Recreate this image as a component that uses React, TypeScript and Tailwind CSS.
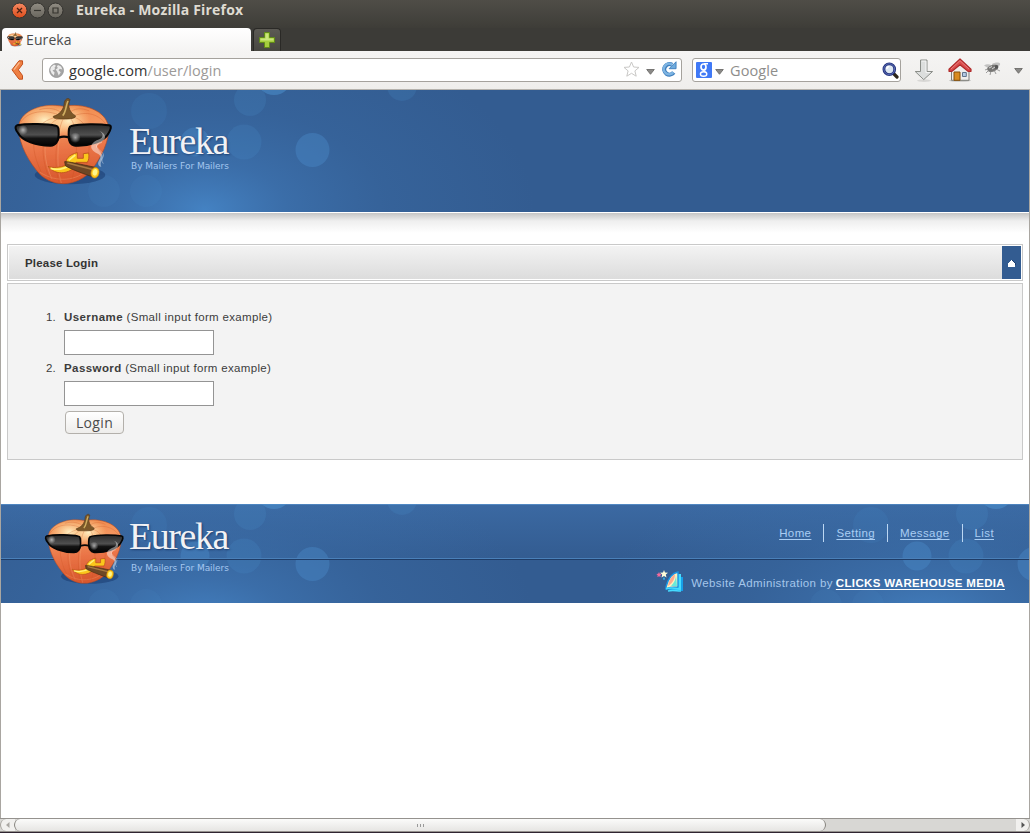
import React from "react";

const UI = "font-['Open_Sans','Noto_Sans',sans-serif]";

function Pumpkin({ id, className }: { id: string; className: string }) {
  const body = `${id}-body`;
  const lens = `${id}-lens`;
  const glow = `${id}-glow`;
  const shine = `${id}-shine`;
  const clip = `${id}-clip`;
  const shape =
    "M190 52C130 40 66 64 57 106C52 150 76 202 108 242C128 270 160 284 190 284C222 284 256 268 276 242C304 204 330 154 325 112C318 66 252 40 190 52Z";
  return (
    <svg viewBox="42 24 297 270" className={className} aria-hidden="true">
      <defs>
        <linearGradient id={body} x1="0" y1="0" x2="0.1" y2="1">
          <stop offset="0" stopColor="#ee8a4c" />
          <stop offset="0.3" stopColor="#f5965f" />
          <stop offset="0.6" stopColor="#ea7548" />
          <stop offset="1" stopColor="#d9592f" />
        </linearGradient>
        <linearGradient id={lens} x1="0" y1="0" x2="0" y2="1">
          <stop offset="0" stopColor="#2a2a2a" />
          <stop offset="0.5" stopColor="#505050" />
          <stop offset="0.66" stopColor="#141414" />
          <stop offset="1" stopColor="#030303" />
        </linearGradient>
        <radialGradient id={glow}>
          <stop offset="0" stopColor="#fff0c4" />
          <stop offset="1" stopColor="#ffd08b" stopOpacity="0" />
        </radialGradient>
        <radialGradient id={shine}>
          <stop offset="0" stopColor="#fff" stopOpacity="0.6" />
          <stop offset="1" stopColor="#fff" stopOpacity="0" />
        </radialGradient>
        <clipPath id={clip}>
          <path d={shape} />
        </clipPath>
      </defs>
      <ellipse cx="210" cy="258" rx="106" ry="28" fill="#15366a" opacity="0.5" />
      <path d={shape} fill={`url(#${body})`} stroke="#b24a24" strokeWidth="2" />
      <g clipPath={`url(#${clip})`}>
        <ellipse cx="134" cy="94" rx="80" ry="54" fill={`url(#${glow})`} />
        <ellipse cx="206" cy="96" rx="66" ry="50" fill={`url(#${glow})`} />
        <g fill="none" stroke="#c9501f" strokeWidth="2" opacity="0.45">
          <path d="M178 78C120 56 78 74 62 100" />
          <path d="M172 84C108 96 76 150 124 250" />
          <path d="M182 86C128 104 112 190 150 272" />
          <path d="M190 88C170 130 158 220 178 282" />
          <path d="M210 86C232 110 238 190 214 280" />
          <path d="M220 84C264 96 284 150 252 258" />
          <path d="M222 80C270 62 306 84 322 112" />
          <path d="M190 76C172 58 144 54 118 62" />
          <path d="M206 74C222 56 246 56 268 66" />
        </g>
        <g fill="none" stroke="#ffcf9b" strokeWidth="3" opacity="0.22">
          <path d="M183 86C135 106 118 190 156 270" />
          <path d="M194 88C176 130 164 220 184 282" />
          <path d="M120 250C170 282 230 276 266 240" />
        </g>
      </g>
      <path d="M160 82C176 78 192 64 193 40C196 28 206 26 210 32C205 44 202 66 226 80C230 88 210 90 192 90C176 90 158 90 160 82Z" fill="#7b5728" stroke="#573614" strokeWidth="2" />
      <path d="M188 80C199 68 197 50 204 36" stroke="#cfae60" strokeWidth="5" fill="none" />
      <path d="M51 109C84 102 144 105 168 110C176 111 176 120 176 138C176 158 166 171 150 170C110 170 66 156 54 132C46 122 44 112 51 109Z" fill={`url(#${lens})`} stroke="#060606" strokeWidth="6" />
      <path d="M214 111C240 104 300 104 328 109C336 111 332 122 326 132C314 158 266 172 226 170C210 168 206 158 206 138C206 122 206 112 214 111Z" fill={`url(#${lens})`} stroke="#060606" strokeWidth="6" />
      <path d="M176 146Q192 140 208 146" stroke="#080808" strokeWidth="7" fill="none" />
      <circle cx="69" cy="123" r="15" fill={`url(#${shine})`} />
      <circle cx="226" cy="146" r="16" fill={`url(#${shine})`} />
      <path d="M144 232C158 238 180 236 200 228C192 212 208 196 232 191L232 208L250 208L250 194L266 192C268 204 266 214 262 220L228 220L222 236C204 254 166 260 144 232Z" fill="#fbc71c" stroke="#b9501a" strokeWidth="2.5" />
      <path d="M152 238C172 244 196 238 212 228M206 214L226 198" stroke="#fff27a" strokeWidth="5" fill="none" />
      <path d="M298 232C286 216 312 208 296 196C266 182 268 166 290 154C310 150 316 134 294 124C324 136 320 152 296 164C280 178 308 188 308 202C308 214 298 220 304 234Z" fill="#fff" opacity="0.45" />
      <path d="M310 224C296 206 322 204 304 188C288 176 282 168 306 160" stroke="#fff" strokeWidth="3" fill="none" opacity="0.35" />
      <path d="M194 218C200 216 266 231 290 236L280 264C254 256 206 238 196 230Z" fill="#6d4725" stroke="#42270f" strokeWidth="2" />
      <path d="M202 222L284 243" stroke="#a87a42" strokeWidth="5" />
      <ellipse cx="285" cy="251" rx="12" ry="16" fill="#ffc91c" stroke="#d08b10" strokeWidth="2" transform="rotate(12 285 251)" />
      <ellipse cx="285" cy="250" rx="7" ry="10" fill="#fff58a" transform="rotate(12 285 250)" />
    </svg>
  );
}

function Bokeh({ id, repeat = false, height }: { id: string; repeat?: boolean; height: number }) {
  const dots: [number, number, number, number][] = [
    [148, 21, 18, 0.12],
    [249, 10, 16, 0.18],
    [273, -13, 18, 0.5],
    [243, 52, 17.5, 0.18],
    [311.5, 60, 17, 0.34],
    [194, 52, 14.5, 0.35],
    [145, 101, 16, 0.1],
    [103, 101, 16, 0.1],
    [401, -4, 15, 0.18],
  ];
  const tile = (dx: number) => (
    <g key={dx} transform={`translate(${dx} 0)`}>
      <ellipse cx="204" cy="120" rx="330" ry="190" fill={`url(#${id})`} />
      {dots.map(([x, y, r, o]) => (
        <circle key={`${x}-${y}`} cx={x} cy={y} r={r} fill="#4e93d2" opacity={o} />
      ))}
    </g>
  );
  return (
    <svg className="absolute inset-0 h-full w-full" viewBox={`0 0 1028 ${height}`} preserveAspectRatio="none" aria-hidden="true">
      <defs>
        <radialGradient id={id}>
          <stop offset="0" stopColor="#4584c5" stopOpacity="0.95" />
          <stop offset="0.25" stopColor="#4079b8" stopOpacity="0.6" />
          <stop offset="0.55" stopColor="#3c71ad" stopOpacity="0.3" />
          <stop offset="1" stopColor="#3b70ab" stopOpacity="0" />
        </radialGradient>
      </defs>
      {tile(0)}
      {repeat && tile(722)}
    </svg>
  );
}

function TitleBar() {
  return (
    <div className="flex h-7 items-start bg-gradient-to-b from-[#4f4d47] to-[#3e3d38] pl-[11px]">
      <svg width="54" height="20" viewBox="0 0 54 20" aria-hidden="true">
        <defs>
          <linearGradient id="closeBtn" x1="0" y1="0" x2="0" y2="1">
            <stop offset="0" stopColor="#f58a63" />
            <stop offset="1" stopColor="#de4c1a" />
          </linearGradient>
          <linearGradient id="greyBtn" x1="0" y1="0" x2="0" y2="1">
            <stop offset="0" stopColor="#918d83" />
            <stop offset="1" stopColor="#68655d" />
          </linearGradient>
        </defs>
        <circle cx="8.5" cy="10.5" r="7.5" fill="url(#closeBtn)" stroke="#33322e" />
        <circle cx="26.5" cy="10.5" r="7.5" fill="url(#greyBtn)" stroke="#33322e" />
        <circle cx="44.5" cy="10.5" r="7.5" fill="url(#greyBtn)" stroke="#33322e" />
        <path d="M6 8l5 5M11 8l-5 5" stroke="#4a2114" strokeWidth="1.3" />
        <path d="M23 10.5h7" stroke="#36352f" strokeWidth="1.2" />
        <path d="M42 8h5v5h-5z" stroke="#36352f" fill="none" strokeWidth="1.2" />
      </svg>
      <span className={`${UI} ml-[11px] whitespace-nowrap text-[14px] font-bold leading-5 tracking-[0.18px] text-[#dfdbd2]`}>
        Eureka - Mozilla Firefox
      </span>
    </div>
  );
}

function TabStrip() {
  return (
    <div className="flex h-[23px] items-end bg-[#3c3b37] pl-[2px]">
      <div className="flex h-[23px] w-[249px] items-center rounded-t-[4px] bg-gradient-to-b from-white to-[#f5f4f3] pl-[5px]">
        <Pumpkin id="fav" className="h-[15px] w-[16px]" />
        <span className={`${UI} ml-[3px] text-[14px] leading-5 tracking-[0.1px] text-[#4c4c4c]`}>Eureka</span>
      </div>
      <div className="ml-[2px] flex h-[23px] w-[28px] items-center justify-center rounded-t-[4px] border border-b-0 border-[#2a2926] bg-gradient-to-b from-[#5c5a54] to-[#474640] pb-[1px]">
        <svg width="16" height="16" viewBox="0 0 16 16" aria-hidden="true">
          <path d="M5.5 .5h5v5h5v5h-5v5h-5v-5h-5v-5h5z" fill="#a5cc3e" stroke="#618a18" />
          <path d="M6.5 1.5h3v5h5v2h-13v-2h5z" fill="#cbe67c" />
        </svg>
      </div>
    </div>
  );
}

function Caret() {
  return (
    <svg width="9" height="6" viewBox="0 0 9 6" className="shrink-0" aria-hidden="true">
      <path d="M.7 .5h7.6L4.5 5.3z" fill="#8a8987" stroke="#636260" strokeWidth=".8" />
    </svg>
  );
}

function Toolbar() {
  return (
    <div className="flex h-[39px] items-center border-b border-[#b5b2ad] bg-gradient-to-b from-[#f5f4f3] to-[#efeeec] pl-[11px]">
      <svg width="14" height="20" viewBox="0 0 14 20" aria-hidden="true">
        <path d="M8 .8L1 9.8L8 19.2L11.5 19.2L11.5 15.5L7.3 9.8L11.6 4.2L11.5 .8z" fill="#ee7f42" stroke="#c4501c" strokeLinejoin="round" />
        <path d="M8.5 2.3L3 9.6" stroke="#fbb98a" strokeWidth="1.4" />
      </svg>
      <div className="ml-[17px] flex h-[24px] w-[640px] items-center rounded-[3px] border border-[#a5a29d] bg-white pl-[6px]">
        <svg width="15" height="15" viewBox="0 0 15 15" aria-hidden="true">
          <circle cx="7.5" cy="7.5" r="6.9" fill="#a6a6a6" stroke="#999" />
          <path d="M2 4L5 1.6L7 2.7L5.6 4.6L6 6.2L3.5 7.5L5.6 9.4L4.8 12.5L2.6 10.2L1.2 7zM9 2l3 1.6 1.4 3-2.6-.8-1.3 1.4 2.2 2-2 3.2-1.4-3.6-1.6-2.2 2.2-1.6-1.1-1.4z" fill="#ececec" />
        </svg>
        <span className={`${UI} ml-[5px] pt-[2px] text-[14.5px] leading-5 tracking-[0.06px] text-[#333]`}>
          google.com<span className="text-[#9c9a98]">/user/login</span>
        </span>
        <div className="ml-auto flex items-center pr-[4px]">
          <svg width="17" height="17" viewBox="0 0 17 17" className="mb-[2px]" aria-hidden="true">
            <path d="M8.5 1l2.1 5 5.4.4-4.1 3.5 1.3 5.3-4.7-2.9-4.7 2.9 1.3-5.3L1 6.4 6.4 6z" fill="#fff" stroke="#c9c8c6" strokeLinejoin="round" />
          </svg>
          <div className="ml-[6px] mt-[3px] flex"><Caret /></div>
          <svg width="16" height="16" viewBox="0 0 17 17" className="mb-[2px] ml-[6px]" aria-hidden="true">
            <path d="M13.5 12.3A5.6 5.6 0 1 1 11.8 4" fill="none" stroke="#3f7fbd" strokeWidth="4.4" />
            <path d="M16 .8v7.4H8.6z" fill="#6facde" stroke="#3f7fbd" strokeLinejoin="round" />
            <path d="M13 12A5.6 5.6 0 1 1 11.8 4" fill="none" stroke="#7db4e2" strokeWidth="2.7" />
          </svg>
        </div>
      </div>
      <div className="ml-[10px] flex h-[24px] w-[209px] items-center rounded-[3px] border border-[#a5a29d] bg-white pl-[3px]">
        <div className="flex h-4 w-4 items-center justify-center rounded-[1px] bg-[#4079f6]">
          <svg width="12" height="16" viewBox="0 0 12 16" fill="none" stroke="#fff" aria-hidden="true">
            <ellipse cx="5.5" cy="5" rx="2.5" ry="3" strokeWidth="1.7" />
            <path d="M6 1.8h4M7.5 7.2c-3 1-1.5 1.7 0 2.2" strokeWidth="1.4" />
            <ellipse cx="5.6" cy="12" rx="3.2" ry="2.3" strokeWidth="1.4" />
          </svg>
        </div>
        <div className="ml-[3px] mt-[3px] flex"><Caret /></div>
        <span className={`${UI} ml-[6px] pt-[2px] text-[14.5px] leading-5 tracking-[0.1px] text-[#8e8d8b]`}>Google</span>
        <svg width="17" height="17" viewBox="0 0 17 17" className="ml-auto mr-[1px]" aria-hidden="true">
          <path d="M12 12l3 3" stroke="#2c251a" strokeWidth="3.2" strokeLinecap="round" />
          <circle cx="7.3" cy="7.2" r="5.4" fill="#dce6f1" stroke="#24337e" strokeWidth="2.8" />
          <circle cx="7.3" cy="7.2" r="5.4" fill="none" stroke="#6a7cc0" strokeWidth=".8" />
          <path d="M4.8 7a2.6 2.6 0 0 1 2.5-2.5" stroke="#fff" strokeWidth="1.4" fill="none" />
        </svg>
      </div>
      <svg width="20" height="23" viewBox="0 0 20 23" className="ml-[13px]" aria-hidden="true">
        <ellipse cx="10" cy="21.6" rx="7" ry="1.3" fill="#000" opacity=".1" />
        <path d="M6.5 1h6.5v11.5h5.6L9.7 20.6 1.2 12.5h5.3z" fill="#dcdedd" stroke="#8a8d88" strokeLinejoin="round" />
        <path d="M7.6 2.1h4.3v11.4h4" fill="none" stroke="#f4f4f4" />
      </svg>
      <svg width="24" height="24" viewBox="0 0 24 24" className="ml-[14px]" aria-hidden="true">
        <ellipse cx="12" cy="22.5" rx="11" ry="1.3" fill="#000" opacity=".18" />
        <path d="M3.5 11.5L12 4l9 7.5v10.8h-17.5z" fill="#eeeeec" stroke="#7c7d79" />
        <path d="M6 14h6v8.3H6z" fill="#d98b20" stroke="#85500a" />
        <path d="M14.5 14.5h3.8v4h-3.8z" fill="#b4cbe4" stroke="#60758c" />
        <path d="M12 1L1 11.3v2h3L12 6.8l8 6.5h3v-2z" fill="#d94b4b" stroke="#b02a2a" strokeWidth="1.2" strokeLinejoin="round" />
        <path d="M3 11L12 2.7 21 11" fill="none" stroke="#ea7f7f" />
      </svg>
      <svg width="17" height="15" viewBox="0 0 17 15" className="mb-[1px] ml-[12px]" aria-hidden="true">
        <path d="M0 3.5C4 .5 9 3 10 7L4 6zM8 2C11 0 15 0 16 1.5 17 4 12 6 8 6z" fill="#b5b5b5" opacity=".8" />
        <path d="M3 7C4 4 9 2 13 3l1 3c-2 4-8 5-10 3z" fill="#777674" />
        <circle cx="12.5" cy="5" r="1.9" fill="#555" />
        <path d="M5 8l-3 3M7 9l-1 4M10 8l2 4M12 7l4 2M3.5 7L1 8" stroke="#888" strokeWidth=".8" />
        <path d="M5 6l3-1.5M8 7l3-2" stroke="#d6d6d6" />
      </svg>
      <div className="ml-[13px] mt-[2px] flex"><Caret /></div>
    </div>
  );
}

function Brand({ className, gap }: { className: string; gap: string }) {
  return (
    <div className={`relative flex flex-col whitespace-nowrap ${className}`}>
      <span className="font-['Liberation_Serif',serif] text-[38px] leading-[36px] tracking-[-1.45px] text-[#f2f2f5] [text-shadow:1px_1px_2px_rgba(15,40,85,0.65)]">
        Eureka
      </span>
      <span className={`pl-[2px] font-['DejaVu_Sans',sans-serif] text-[9px] leading-3 tracking-[-0.03px] text-[#a4c6ef] ${gap}`}>
        By Mailers For Mailers
      </span>
    </div>
  );
}

function Field({ name, index, gap = "", type }: { name: string; index: number; gap?: string; type: string }) {
  return (
    <li className={`flex ${gap}`}>
      <span className="w-[18px] shrink-0 leading-4 tracking-[0.2px]">{index}.</span>
      <div>
        <label className="block whitespace-nowrap leading-4 tracking-[0.33px]">
          <strong className="tracking-[0.42px]">{name}</strong> (Small input form example)
        </label>
        <input className="mt-[5px] block h-[25px] w-[150px] border border-[#949494] bg-white px-1 outline-none" type={type} />
      </div>
    </li>
  );
}

const links = ["Home", "Setting", "Message", "List"];
const linkPad = ["pr-[12px]", "px-[12px]", "px-[12px]", "pl-[12px]"];

export default function App() {
  return (
    <div className="flex h-[833px] w-[1030px] flex-col overflow-hidden bg-[#3c3b37]">
      <TitleBar />
      <TabStrip />
      <Toolbar />
      <main className="flex h-[728px] flex-col border-x border-[#a9a6a1] bg-white font-['Liberation_Sans',Arial,sans-serif] text-[11.5px] text-[#3c3c3c]">
        <header className="relative flex h-[122px] shrink-0 overflow-hidden bg-[#335c91]">
          <Bokeh id="headGlow" height={122} />
          <Pumpkin id="head" className="relative ml-[13px] mt-[7px] h-[90px] w-[99px]" />
          <Brand className="ml-[16px] mt-[33px]" gap="mt-[1px]" />
        </header>
        <div className="mt-px h-5 shrink-0 bg-gradient-to-b from-[#c5c5c5] via-[#efefef] via-40% to-white" />
        <section className="mx-[6px] mt-[11px] shrink-0">
          <div className="flex h-[37px] border border-[#c9c9c9] bg-white p-px">
            <h1 className="flex flex-1 items-center bg-gradient-to-b from-[#f3f3f3] to-[#dcdcdc] pl-4 pt-[2px] font-bold tracking-[0.18px] text-[#333]">Please Login</h1>
            <button className="flex w-[19px] items-center justify-center bg-[#335c91]" aria-label="Collapse">
              <svg width="9" height="8" viewBox="0 0 9 8" className="mt-[1px]" aria-hidden="true">
                <path d="M2 5V4h1V3h1V2h1V1h1v1h1v1h1v1h1v2H8z" fill="#1d3f70" />
                <path d="M1 8V4h1V3h1V2h1V1h1v1h1v1h1v1h1v4z" fill="#fff" />
              </svg>
            </button>
          </div>
          <div className="mt-[2px] h-[177px] border border-[#c9c9c9] bg-[#f3f3f3] pl-[38px] pt-[25px]">
            <ol>
              <Field index={1} name="Username" type="text" />
              <Field index={2} name="Password" type="password" gap="mt-[5px]" />
            </ol>
            <button className={`${UI} ml-[19px] mt-[5px] flex h-[23px] w-[59px] items-center justify-center rounded-[4px] border border-[#b3b0ab] bg-gradient-to-b from-white to-[#eeedeb] text-[14px] tracking-[0.35px] text-[#4c4c4c]`}>
              Login
            </button>
          </div>
        </section>
        <footer className="relative mt-[44px] flex h-[99px] shrink-0 overflow-hidden bg-[linear-gradient(to_bottom,#5288c2_0px,#5288c2_1px,#3b69a2_1px,#335c91_54px,#335c91_99px)]">
          <Bokeh id="footGlow" repeat height={99} />
          <div className="absolute inset-x-0 top-[54px] h-[2px] border-t border-[#4a80b9] bg-[#1f3d68]" />
          <Pumpkin id="foot" className="relative ml-[43px] mt-[9px] h-[73px] w-[81px]" />
          <Brand className="ml-[4px] mt-[14px]" gap="mt-[8px]" />
          <div className="relative ml-auto flex flex-col items-end">
            <nav className="mr-[35px] mt-[20px] flex h-[18px] text-[#a9cdf3]">
              {links.map((l, i) => (
                <div key={l} className={`flex items-center ${linkPad[i]} ${i < 3 ? "border-r border-[#bcd7f3]" : ""}`}>
                  <a className="leading-[18px] tracking-[0.4px] underline underline-offset-2">{l}</a>
                </div>
              ))}
            </nav>
            <div className="mr-[24px] mt-[28px] flex items-center whitespace-nowrap text-[#a5c6ea]">
              <svg width="28" height="23" viewBox="0 0 28 23" className="mr-[7px]" aria-hidden="true">
                <path d="M25 7h2v14H14l-2-2h13z" fill="#169fe8" />
                <path d="M22 4h3v16l-12-1 9-1z" fill="#45dcff" />
                <path d="M10 17C12 9 16 3 22 2v15c-5 0-9 0-12 2z" fill="#fff0bd" stroke="#1793e2" strokeWidth="1.4" />
                <path d="M12 16C13 10 16 6 19 4c0 4-2 9-7 12z" fill="#ffa98e" />
                <path d="M15 16c3-3 5-7 5-11l1 11z" fill="#69e9db" />
                <path d="M10 19c5-2 8-1 14 0M12 21c5-1 8 0 13 0" stroke="#45dcff" fill="none" strokeWidth="1.5" />
                <path d="M8 0l1 2.5 3 .2-2.2 1.9.7 3L8 6 5.5 7.6l.7-3L4 2.7l3-.2z" fill="#fffcd8" />
                <path d="M3 2l.8 1.7 1.9.2-1.4 1.3.4 1.9L3 6.200l-1.7.9.4-1.9L.3 3.900l1.9-.2z" fill="#f66a9b" />
                <path d="M8 7l1 2-1 1-1-1z" fill="#36bdf2" />
              </svg>
              <span className="pt-[4px] tracking-[0.38px]">Website Administration by</span>
              <a className="ml-[3px] pt-[4px] font-bold tracking-[0.34px] text-white underline underline-offset-2">CLICKS WAREHOUSE MEDIA</a>
            </div>
          </div>
        </footer>
      </main>
      <div className="flex h-[14px] border-y border-[#95928e] bg-[#d8d7d4]">
        <div className="flex w-[15px] items-center justify-center rounded-l-full border-l border-[#a5a29d] bg-[#f1f0ee]">
          <svg width="4" height="6" viewBox="0 0 4 6" aria-hidden="true"><path d="M3.5 0v6L0 3z" fill="#aaa7a3" /></svg>
        </div>
        <div className="-ml-px flex w-[812px] items-center justify-center gap-[2px] rounded-full border-x border-[#86837e] bg-gradient-to-b from-[#fbfbfa] to-[#e6e5e3]">
          <i className="h-[3px] w-px bg-[#999]" />
          <i className="h-[3px] w-px bg-[#999]" />
          <i className="h-[3px] w-px bg-[#999]" />
        </div>
        <div className="ml-auto flex w-[14px] items-center justify-center rounded-r-full border-r border-[#a5a29d] bg-[#f1f0ee]">
          <svg width="4" height="6" viewBox="0 0 4 6" aria-hidden="true"><path d="M.5 0v6L4 3z" fill="#555" /></svg>
        </div>
      </div>
      <div className="h-px bg-[#2f2430]" />
    </div>
  );
}
